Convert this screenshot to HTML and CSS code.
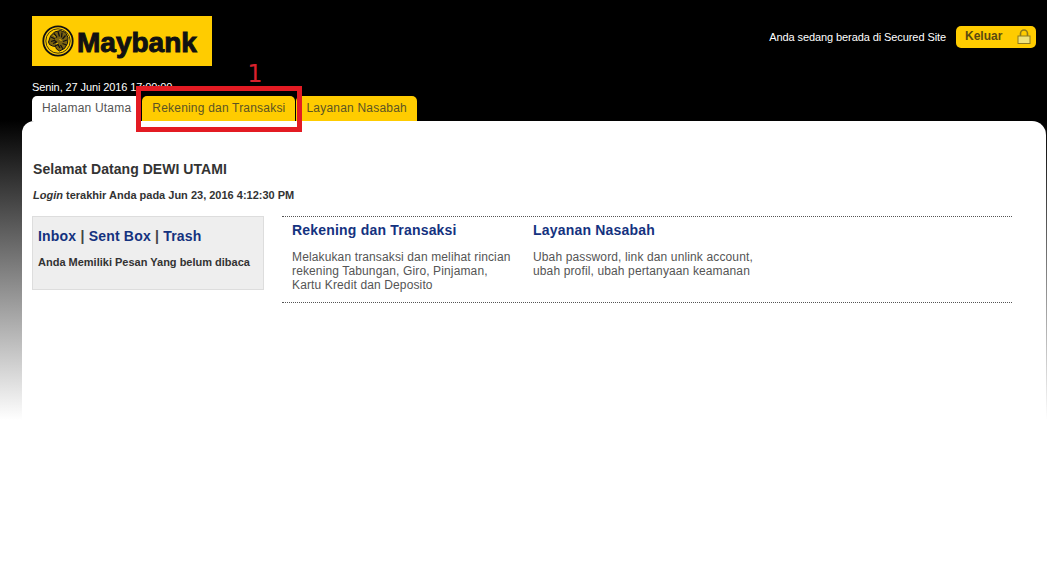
FILE: index.html
```html
<!DOCTYPE html>
<html lang="en">
<head>
<meta charset="UTF-8">
<meta name="viewport" content="width=device-width, initial-scale=1.0">
<title>Maybank</title>
<link rel="stylesheet" href="styles.css">
</head>
<body>

<div class="header">
  <div class="logo">
    <svg class="logo-tiger" width="32" height="32" viewBox="0 0 32 32">
      <circle cx="16" cy="16" r="14.7" fill="none" stroke="#111" stroke-width="1.8"/>
      <circle cx="16" cy="16" r="12.2" fill="none" stroke="#111" stroke-width="0.8"/>
      <path d="M6.5 17l2-6 4-4 6-1.500 5 2 2.500 5-.5 6-3 5-5 2.500-3-2-1-2.500-3-.5-3-1.500z" fill="#7a6210" stroke="#111" stroke-width="1"/>
      <path d="M9 12l4 2M12 8.500l3 4M16 6.500l1.500 5M20 7.500l-.5 5M23.500 10.500l-3 3.500M25 15l-4 1.500M24.500 20l-4-1.500M21 24l-2.500-4M9 16.500l3.500-1 2 1.500-3.500 1.500M13 21l3-1.500 2 3.500" fill="none" stroke="#111" stroke-width="1.300"/>
      <path d="M11.500 10.500l2 1M17.500 14.500l2 1M14 19l2-1" fill="none" stroke="#ffcc00" stroke-width="0.9"/>
    </svg>
    <span class="logo-text">Maybank</span>
  </div>
  <div class="secure">
    <span class="secure-text">Anda sedang berada di Secured Site</span>
    <a class="logout">
      Keluar
      <svg width="14" height="15" viewBox="0 0 14 15">
        <path d="M3.500 7V4.500a3.500 3.500 0 0 1 7 0V7" fill="none" stroke="#8f7a1c" stroke-width="1.600"/>
        <rect x="1" y="7" width="12" height="7.500" fill="#efe27a" stroke="#8f7a1c"/>
      </svg>
    </a>
  </div>
</div>

<div class="date">Senin, 27 Juni 2016 17:00:00</div>

<div class="tabs">
  <div class="tab tab-active">Halaman Utama</div>
  <div class="tab">Rekening dan Transaksi</div>
  <div class="tab">Layanan Nasabah</div>
</div>

<div class="marker">
  <div class="marker-num">1</div>
  <div class="marker-box"></div>
</div>

<div class="panel">
  <h1 class="welcome">Selamat Datang DEWI UTAMI</h1>
  <p class="last-login"><em>Login</em> terakhir Anda pada Jun 23, 2016 4:12:30 PM</p>

  <div class="content">
    <div class="inbox">
      <div class="inbox-links"><a>Inbox</a> | <a>Sent Box</a> | <a>Trash</a></div>
      <div class="inbox-msg">Anda Memiliki Pesan Yang belum dibaca</div>
    </div>
    <div class="menu">
      <div class="menu-item">
        <h2>Rekening dan Transaksi</h2>
        <p>Melakukan transaksi dan melihat rincian rekening Tabungan, Giro, Pinjaman, Kartu Kredit dan Deposito</p>
      </div>
      <div class="menu-item">
        <h2>Layanan Nasabah</h2>
        <p>Ubah password, link dan unlink account, ubah profil, ubah pertanyaan keamanan</p>
      </div>
    </div>
  </div>
</div>

</body>
</html>
```

FILE: styles.css
```css
html, body {
  margin: 0;
  height: 100%;
}
body {
  position: relative;
  overflow: hidden;
  font-family: "Liberation Sans", Arial, sans-serif;
  font-size: 12px;
  color: #333;
  background: linear-gradient(to bottom, #000 0, #000 120px, #fff 420px, #fff 100%);
}
.header {
  display: flex;
  justify-content: space-between;
  align-items: flex-start;
  padding: 16px 11px 0 32px;
}
.logo {
  width: 180px;
  height: 50px;
  background-color: #ffcc00;
  display: flex;
  align-items: center;
  padding-left: 10px;
  box-sizing: border-box;
}
.logo-text {
  font-weight: bold;
  font-size: 28px;
  color: #111;
  margin: 3px 0 0 3px;
  -webkit-text-stroke: 1px #111;
}
.secure {
  display: flex;
  align-items: center;
  margin-top: 10px;
}
.secure-text {
  color: #fff;
  font-size: 11px;
  letter-spacing: -0.09px;
  margin-right: 10px;
}
.logout {
  width: 80px;
  height: 22px;
  background-color: #ffcc00;
  border-radius: 5px;
  display: flex;
  align-items: center;
  justify-content: space-between;
  padding: 0 5px 2px 9px;
  box-sizing: border-box;
  font-weight: bold;
  font-size: 12px;
  color: #5a4a10;
}
.date {
  color: #fff;
  font-size: 11px;
  letter-spacing: -0.1px;
  margin: 15px 0 0 32px;
  line-height: 13px;
}
.tabs {
  display: flex;
  margin: 2px 0 0 32px;
  gap: 1px;
}
.tab {
  background-color: #ffcc00;
  color: #5c5424;
  padding: 0 10px;
  height: 25px;
  line-height: 24px;
  border-radius: 5px 5px 0 0;
  letter-spacing: 0.2px;
}
.tab-active {
  background-color: #fff;
  color: #555;
}
.marker {
  position: absolute;
  left: 136px;
  top: 62px;
  width: 166px;
}
.marker-num {
  color: #d8202c;
  font-family: "DejaVu Sans", sans-serif;
  font-size: 24px;
  text-align: center;
  line-height: 24px;
  margin-left: 108px;
  width: 22px;
}
.marker-box {
  border: 5px solid #e31b23;
  box-sizing: border-box;
  height: 46px;
}
.panel {
  background-color: #fff;
  margin: 0 1px 0 22px;
  height: 442px;
  border-radius: 12px 14px 0 0;
  padding: 40px 11px 0 11px;
  box-sizing: border-box;
}
.welcome {
  margin: 0;
  font-size: 14px;
  line-height: 16px;
  letter-spacing: 0.05px;
  color: #333;
}
.last-login {
  margin: 11px 0 0 0;
  font-size: 11px;
  font-weight: bold;
  line-height: 14px;
}
.content {
  display: flex;
  margin: 14px 0 0 -1px;
}
.inbox {
  width: 232px;
  height: 74px;
  box-sizing: border-box;
  background-color: #eee;
  border: 1px solid #ddd;
  padding: 11px 5px 0 5px;
}
.inbox-links {
  font-size: 14px;
  font-weight: bold;
  line-height: 17px;
  color: #444;
  letter-spacing: 0.2px;
}
.inbox-links a {
  color: #14327f;
}
.inbox-msg {
  margin-top: 10px;
  font-size: 11px;
  font-weight: bold;
  line-height: 14px;
}
.menu {
  display: flex;
  width: 730px;
  height: 87px;
  margin-left: 18px;
  box-sizing: border-box;
  border-top: 1px dotted #555;
  border-bottom: 1px dotted #555;
  padding: 5px 0 0 10px;
}
.menu-item {
  width: 241px;
}
.menu-item h2 {
  margin: 0;
  font-size: 14px;
  line-height: 16px;
  color: #14327f;
  letter-spacing: 0.2px;
}
.menu-item p {
  margin: 12px 0 0 0;
  font-size: 12px;
  line-height: 14px;
  width: 225px;
  letter-spacing: 0.13px;
  color: #555;
}
```
